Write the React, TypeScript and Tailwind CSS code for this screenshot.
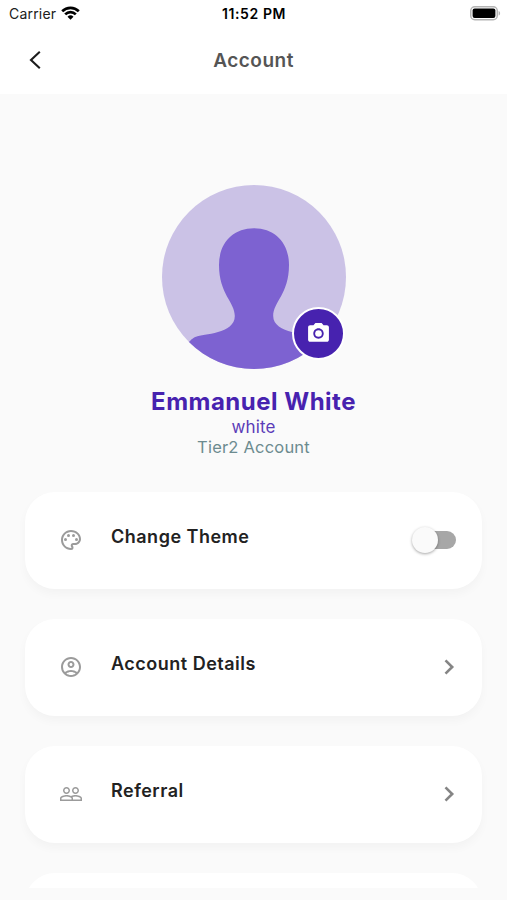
import type { ReactNode } from 'react'
import {
  MdCameraAlt,
  MdOutlineAccountCircle,
  MdOutlinePalette,
  MdPeopleOutline,
} from 'react-icons/md'

function StatusBar() {
  return (
    <div className="flex h-7 items-center justify-between pl-[9px] pr-[6px] text-[14px] text-[#202020]">
      <div className="flex w-[120px] items-center gap-[5px] pb-[2px]">
        <span className="tracking-[0.2px]">Carrier</span>
        <svg width="19" height="14" viewBox="0 0 19 14" fill="none" stroke="#000" strokeWidth="2.7">
          <path d="M1.2 5.2a11.8 11.8 0 0 1 16.6 0" />
          <path d="M4.2 8.4a7.5 7.5 0 0 1 10.6 0" />
          <path d="M6.5 10.7a4.3 4.3 0 0 1 6 0l-3 3z" fill="#000" stroke="none" />
        </svg>
      </div>
      <span className="pb-px pr-[2px] font-semibold tracking-[0.6px] text-black">11:52 PM</span>
      <div className="flex w-[120px] justify-end pb-[2px]">
        <svg width="31" height="15" viewBox="0 0 31 15">
          <rect x=".75" y=".75" width="26.5" height="13" rx="4" fill="#fff" stroke="#b4b4b4" strokeWidth="1.5" />
          <rect x="2.6" y="2.6" width="22.8" height="9.3" rx="2" fill="#000" />
          <path d="M28.6 5v4.6c2-.7 2-3.9 0-4.6z" fill="#b4b4b4" />
        </svg>
      </div>
    </div>
  )
}

function Header() {
  return (
    <div className="grid h-[64px] grid-cols-[60px_1fr_60px] items-center">
      <svg className="ml-[28px]" width="14" height="20" viewBox="0 0 14 20" fill="none" stroke="#1c1c1c" strokeWidth="2.1">
        <path d="M11.8 1.8 3 10l8.8 8.2" />
      </svg>
      <h1 className="pt-[2px] text-center text-[19px] font-semibold tracking-[0.5px] text-[#555]">Account</h1>
    </div>
  )
}

function Avatar() {
  return (
    <div className="relative mx-auto size-[184px]">
      <div className="size-full overflow-hidden rounded-full bg-[#cbc2e6]">
        <svg width="184" height="184" viewBox="0 0 184 184" fill="#7d62d1">
          <path d="M92 43.3C70 43.3 57 59 57 80c0 29 15.8 37 15.8 51 0 18-31.8 18-38.8 20.7-4 1.6-5 3.3-8 6.3V184h136v-26c-3-3-4-4.7-8-6.3-7-2.7-42.8-2.7-42.8-20.7 0-14 15.8-22 15.8-51 0-21-13-36.7-35-36.7z" />
        </svg>
      </div>
      <div className="absolute left-[130px] top-[122px] flex size-[53px] items-center justify-center rounded-full border-2 border-white bg-[#4722af]">
        <MdCameraAlt size={25} color="#fff" />
      </div>
    </div>
  )
}

function Toggle() {
  return (
    <div className="mb-[2px] flex h-[18px] w-[44px] items-center">
      <div className="z-10 size-[26px] shrink-0 rounded-full bg-[#fafafa] shadow-[0_1px_3px_rgba(0,0,0,0.35)]" />
      <div className="-ml-[15px] h-[18px] w-[33px] shrink-0 rounded-full bg-[#a7a7a7]" />
    </div>
  )
}

function Chevron() {
  return (
    <svg className="mb-[2px] mr-px" width="11" height="16" viewBox="0 0 11 16" fill="none" stroke="#858585" strokeWidth="2.6">
      <path d="m1.5 1.3 6.7 6.7-6.7 6.7" />
    </svg>
  )
}

function Row({ icon, label, children }: { icon: ReactNode; label: string; children: ReactNode }) {
  return (
    <div className="flex h-[97px] shrink-0 items-center rounded-[30px] bg-white pl-[34px] pr-[26px] shadow-[0_5px_10px_rgba(0,0,0,0.03)]">
      <div className="w-[52px] pb-[2px] text-[#9b9b9b]">{icon}</div>
      <span className="flex-1 pb-[8px] text-[18px] font-semibold leading-6 tracking-[0.5px] text-[#222]">{label}</span>
      {children}
    </div>
  )
}

export default function App() {
  return (
    <div className="h-[900px] w-[507px] overflow-hidden bg-[#fafafa] font-['Inter',sans-serif]">
      <div className="h-[94px] bg-white">
        <StatusBar />
        <Header />
      </div>

      <div className="h-[794px] overflow-hidden pt-[91px]">
        <Avatar />
        <div className="mt-4 text-center">
          <h2 className="text-[24px] font-bold leading-[34px] tracking-[0.5px] text-[#4722af]">Emmanuel White</h2>
          <p className="pt-px text-[17px] leading-[15px] tracking-[0.1px] text-[#5a3cb8]">white</p>
          <p className="text-[16.5px] leading-6 tracking-[0.2px] text-[#6c8b8f]">Tier2 Account</p>
        </div>

        <div className="mt-[33px] flex flex-col gap-[30px] px-[25px]">
          <Row icon={<MdOutlinePalette size={24} />} label="Change Theme">
            <Toggle />
          </Row>
          <Row icon={<MdOutlineAccountCircle size={24} />} label="Account Details">
            <Chevron />
          </Row>
          <Row icon={<MdPeopleOutline size={24} />} label="Referral">
            <Chevron />
          </Row>
          <div className="h-[97px] shrink-0 rounded-[30px] bg-white" />
        </div>
      </div>
    </div>
  )
}
